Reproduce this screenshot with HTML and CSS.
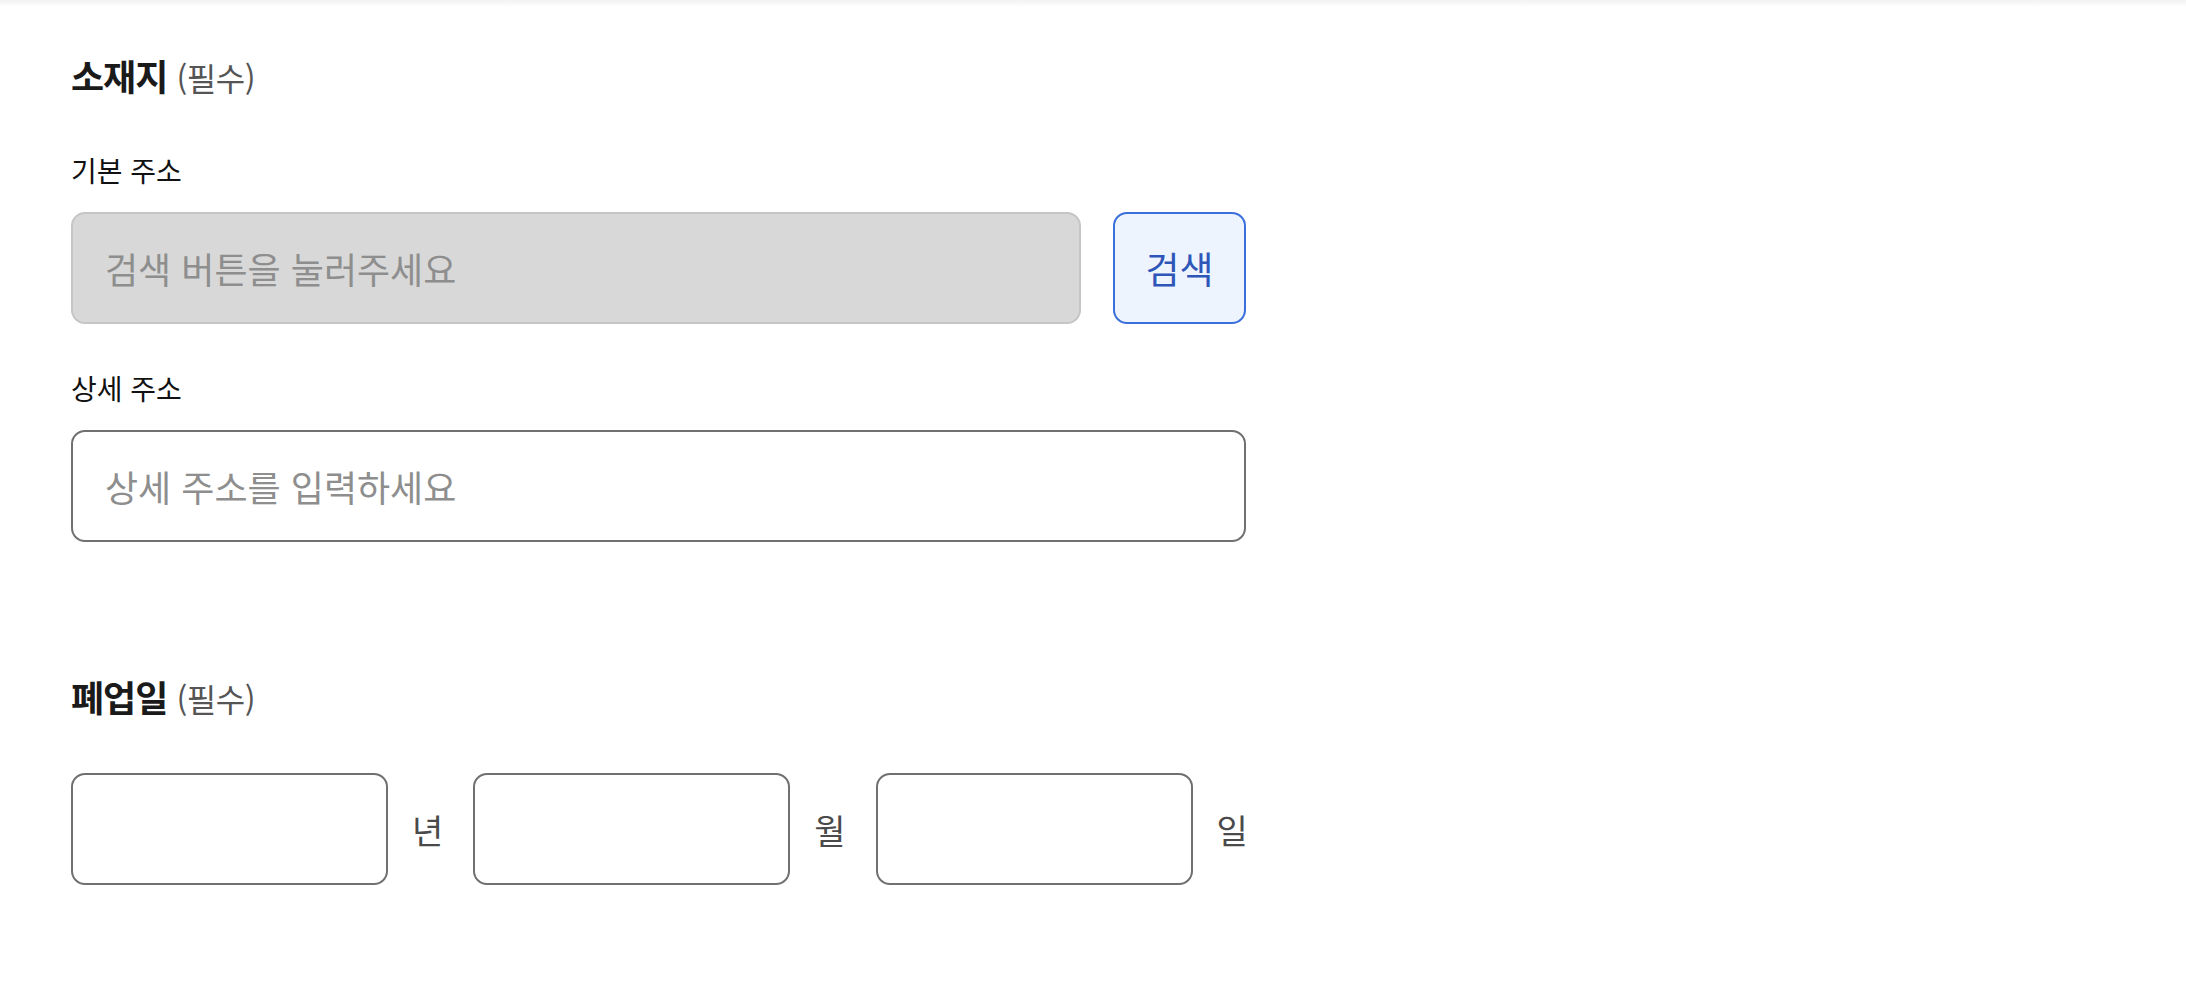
FILE: index.html
```html
<!DOCTYPE html>
<html lang="ko">
<head>
<meta charset="utf-8">
<title>소재지 / 폐업일</title>
<link rel="stylesheet" href="styles.css">
</head>
<body class="page">
<div class="topshade"></div>
<main class="form">
  <section class="section">
    <h2 class="section-title">소재지 <span class="required">(필수)</span></h2>
    <div class="field">
      <label class="field-label" for="addr1">기본 주소</label>
      <div class="search-row">
        <input id="addr1" class="input input-disabled" type="text" placeholder="검색 버튼을 눌러주세요" disabled>
        <button class="search-btn" type="button">검색</button>
      </div>
    </div>
    <div class="field field-second">
      <label class="field-label" for="addr2">상세 주소</label>
      <input id="addr2" class="input" type="text" placeholder="상세 주소를 입력하세요">
    </div>
  </section>
  <section class="section section-date">
    <h2 class="section-title">폐업일 <span class="required">(필수)</span></h2>
    <div class="date-row">
      <input class="input date-input" type="text" aria-label="년">
      <span class="date-unit">년</span>
      <input class="input date-input" type="text" aria-label="월">
      <span class="date-unit">월</span>
      <input class="input date-input" type="text" aria-label="일">
      <span class="date-unit">일</span>
    </div>
  </section>
</main>
</body>
</html>
```

FILE: styles.css
```css
* { box-sizing: border-box; }

.page {
  margin: 0;
  background: #ffffff;
  font-family: "Noto Sans CJK KR", "Noto Sans", sans-serif;
  color: #111111;
}

.topshade {
  height: 7px;
  background: linear-gradient(to bottom, #f2f2f2, #ffffff);
}

.form {
  width: 1175px;
  margin-left: 71px;
  padding-top: 48px;
}

.section-title {
  margin: 0;
  font-size: 36px;
  line-height: 40px;
  font-weight: 700;
  color: #1a1a1a;
  letter-spacing: -1px;
}

.required {
  font-size: 32px;
  font-weight: 400;
  color: #555555;
  letter-spacing: -0.5px;
}

.field {
  margin-top: 55px;
}

.field-second {
  margin-top: 46px;
}

.field-label {
  display: block;
  font-size: 28px;
  line-height: 36px;
  color: #111111;
  margin-bottom: 24px;
}

.search-row {
  display: flex;
  gap: 32px;
}

.input {
  display: block;
  width: 100%;
  height: 112px;
  padding: 0 32px;
  border: 2px solid #707070;
  border-radius: 14px;
  background: #ffffff;
  font-family: inherit;
  font-size: 36px;
  color: #111111;
  outline: none;
}

.input::placeholder {
  color: #8e8e8e;
}

.input-disabled {
  flex: 1;
  background: #d8d8d8;
  border-color: #c6c6c6;
}

.search-btn {
  flex: 0 0 133px;
  height: 112px;
  border: 2px solid #3b6fdc;
  border-radius: 14px;
  background: #eef4fd;
  color: #2d56b8;
  font-family: inherit;
  font-size: 37px;
  padding: 0;
}

.section-date {
  margin-top: 134px;
}

.date-row {
  margin-top: 55px;
  display: flex;
  align-items: center;
}

.date-input {
  flex: 0 0 317px;
  width: 317px;
}

.date-unit {
  font-size: 34px;
  color: #4a4a4a;
  margin: 0 30px 0 24px;
}
```
